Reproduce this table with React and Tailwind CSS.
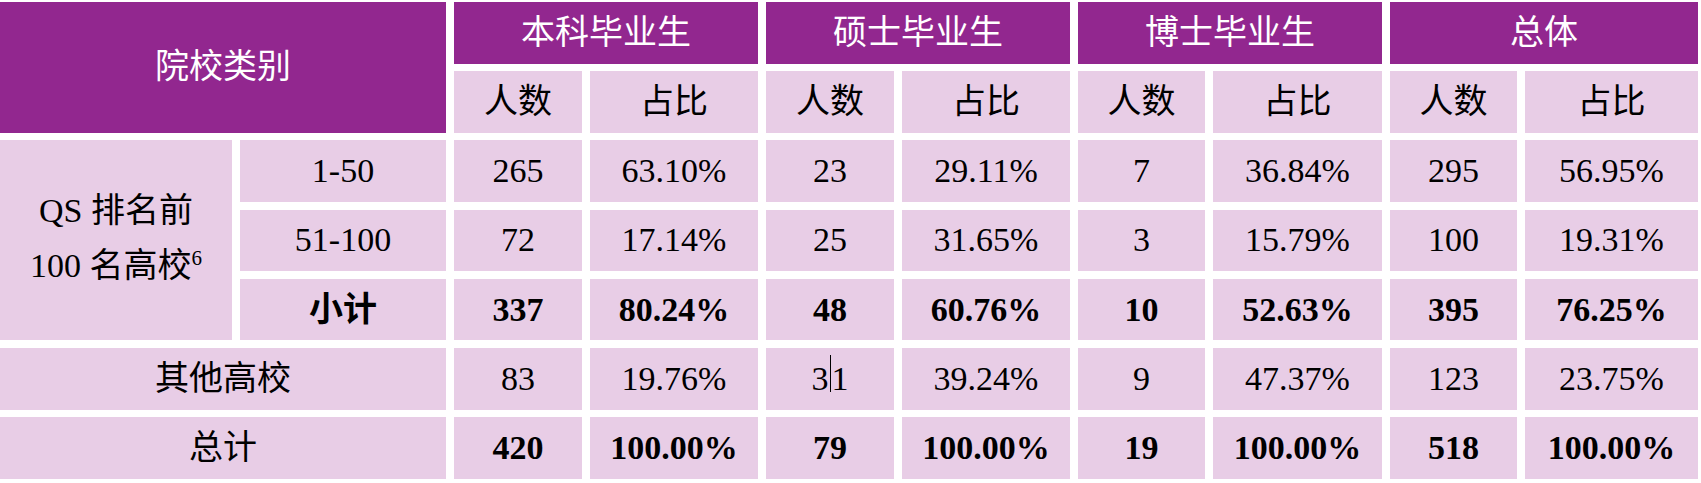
import React from "react";

const PURPLE = "bg-[#92278f]";
const PINK = "bg-[#e8cde6]";

function Cell({ className = "", children, bold = false }) {
  return (
    <div
      className={`flex items-center justify-center ${PINK} text-black text-[34px] leading-none ${bold ? "font-bold" : ""} ${className}`}
    >
      {children}
    </div>
  );
}

function HeadCell({ className = "", children }) {
  return (
    <div
      className={`flex items-center justify-center ${PURPLE} text-white text-[34px] leading-none ${className}`}
    >
      {children}
    </div>
  );
}

const rows = [
  ["265", "63.10%", "23", "29.11%", "7", "36.84%", "295", "56.95%"],
  ["72", "17.14%", "25", "31.65%", "3", "15.79%", "100", "19.31%"],
  ["337", "80.24%", "48", "60.76%", "10", "52.63%", "395", "76.25%"],
  ["83", "19.76%", "3|1", "39.24%", "9", "47.37%", "123", "23.75%"],
  ["420", "100.00%", "79", "100.00%", "19", "100.00%", "518", "100.00%"],
];

function Value({ v }) {
  if (v === "3|1") {
    return (
      <span className="flex items-center">
        <span>3</span>
        <span className="inline-block w-px h-[37px] bg-black mx-px -mt-[10px]"></span>
        <span>1</span>
      </span>
    );
  }
  return <span>{v}</span>;
}

export default function App() {
  return (
    <div className="w-[1701px] h-[483px] bg-white pt-[2px] font-['Liberation_Serif','Noto_Sans_CJK_SC',serif]">
      <div className="grid grid-cols-[232px_206px_128px_168px_128px_168px_127px_169px_127px_173px] grid-rows-[repeat(7,61.6px)] gap-x-[8px] gap-y-[7.6px]">
        {/* header row 1 */}
        <HeadCell className="col-span-2 row-span-2">院校类别</HeadCell>
        <HeadCell className="col-span-2">本科毕业生</HeadCell>
        <HeadCell className="col-span-2">硕士毕业生</HeadCell>
        <HeadCell className="col-span-2">博士毕业生</HeadCell>
        <HeadCell className="col-span-2">总体</HeadCell>
        {/* header row 2 */}
        <Cell>人数</Cell>
        <Cell>占比</Cell>
        <Cell>人数</Cell>
        <Cell>占比</Cell>
        <Cell>人数</Cell>
        <Cell>占比</Cell>
        <Cell>人数</Cell>
        <Cell>占比</Cell>

        {/* body row 1 */}
        <Cell className="row-span-3">
          <div className="flex flex-col items-center gap-[21px] -mt-[4px]">
            <span className="block h-[34px]">QS 排名前</span>
            <span className="block h-[34px]">
              100 名高校<sup className="text-[21px] -top-[12px]">6</sup>
            </span>
          </div>
        </Cell>
        <Cell>1-50</Cell>
        {rows[0].map((v, i) => (
          <Cell key={"r0" + i}>
            <Value v={v} />
          </Cell>
        ))}
        {/* body row 2 */}
        <Cell>51-100</Cell>
        {rows[1].map((v, i) => (
          <Cell key={"r1" + i}>
            <Value v={v} />
          </Cell>
        ))}
        {/* body row 3 */}
        <Cell bold>小计</Cell>
        {rows[2].map((v, i) => (
          <Cell key={"r2" + i} bold>
            <Value v={v} />
          </Cell>
        ))}
        {/* other */}
        <Cell className="col-span-2">其他高校</Cell>
        {rows[3].map((v, i) => (
          <Cell key={"r3" + i}>
            <Value v={v} />
          </Cell>
        ))}
        {/* total */}
        <Cell className="col-span-2">总计</Cell>
        {rows[4].map((v, i) => (
          <Cell key={"r4" + i} bold>
            <Value v={v} />
          </Cell>
        ))}
      </div>
    </div>
  );
}
